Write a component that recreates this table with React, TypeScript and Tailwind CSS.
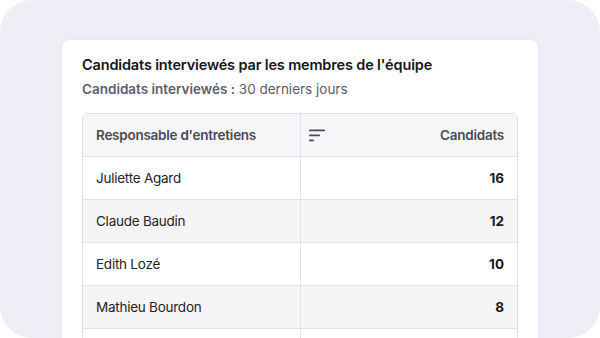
import React from "react";

const rows = [
  { name: "Juliette Agard", n: 16 },
  { name: "Claude Baudin", n: 12 },
  { name: "Edith Lozé", n: 10 },
  { name: "Mathieu Bourdon", n: 8 },
  { name: "", n: null as number | null },
];

export default function App() {
  return (
    <div className="w-[600px] h-[338px] bg-white overflow-hidden" style={{ fontFamily: "Inter, 'Noto Sans', sans-serif" }}>
      <div className="w-full h-full rounded-[32px] bg-[#efedf5] pt-[40px] px-[62px] overflow-hidden">
        <div className="bg-white rounded-[8px] shadow-[0_1px_4px_rgba(60,50,100,0.08)] px-[20px] pt-[15px] h-[320px]">
          <div className="text-[14.5px] tracking-[-0.15px] font-semibold text-[#15151c] leading-[20px]">
            Candidats interviewés par les membres de l'équipe
          </div>
          <div className="mt-[4px] text-[13.5px] leading-[20px] text-[#5e5c6b]">
            <span className="font-semibold">Candidats interviewés :</span> 30 derniers jours
          </div>
          <div className="mt-[14px] border border-[#e1dfe7] rounded-[6px] overflow-hidden">
            <div className="flex h-[43px] bg-[#f7f7f9] border-b border-[#e1dfe7]">
              <div className="w-[218px] border-r border-[#e1dfe7] flex items-center pl-[13px] text-[13.5px] tracking-[-0.25px] font-semibold text-[#4b4a57]">
                Responsable d'entretiens
              </div>
              <div className="flex-1 flex items-center justify-between pl-[8px] pr-[13px]">
                <svg width="18" height="14" viewBox="0 0 18 14">
                  <rect x="0" y="1.5" width="16" height="1.8" rx="0.9" fill="#4b4a57" />
                  <rect x="0" y="6.5" width="11" height="1.8" rx="0.9" fill="#4b4a57" />
                  <rect x="0" y="11.5" width="5" height="1.8" rx="0.9" fill="#4b4a57" />
                </svg>
                <span className="text-[13.5px] tracking-[-0.25px] font-semibold text-[#4b4a57]">Candidats</span>
              </div>
            </div>
            {rows.map((r, i) => (
              <div
                key={i}
                className={`flex h-[43px] border-b border-[#e1dfe7] ${i % 2 === 1 ? "bg-[#f5f5f6]" : "bg-white"}`}
              >
                <div className="w-[218px] border-r border-[#e1dfe7] flex items-center pl-[13px] text-[13.5px] tracking-[-0.25px] text-[#25242c]">
                  {r.name}
                </div>
                <div className="flex-1 flex items-center justify-end pr-[13px] text-[13.5px] font-bold text-[#1c1b22]">
                  {r.n}
                </div>
              </div>
            ))}
          </div>
        </div>
      </div>
    </div>
  );
}
